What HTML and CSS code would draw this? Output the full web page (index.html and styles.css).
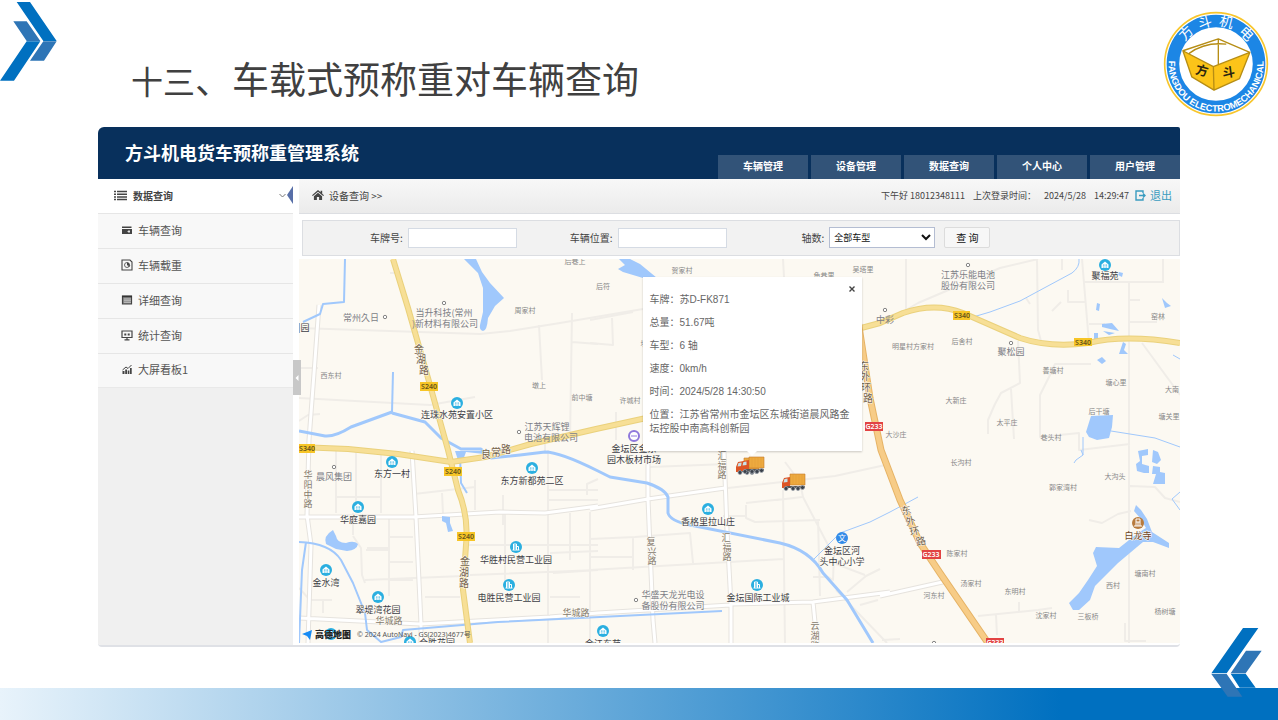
FILE: index.html
```html
<!DOCTYPE html>
<html lang="zh-CN">
<head>
<meta charset="utf-8">
<meta name="viewport" content="width=device-width, initial-scale=1">
<title>方斗机电货车预称重管理系统</title>
<link rel="stylesheet" href="styles.css">
</head>
<body>
<header class="slide-head">
  <svg class="chevron" viewBox="0 0 171 243" aria-hidden="true">
    <path fill="#0070c0" d="M50 6H90L170 123H130ZM80 124H121L42 242H0Z"/>
    <path fill="#2e75b6" d="M40 64H80L121 123H80ZM130 124H170L132 182H90Z"/>
  </svg>
  <h1 class="slide-title"><span class="slide-number">十三</span>、车载式预称重对车辆查询</h1>
  <svg class="logo" viewBox="40 32 318 320" role="img" aria-label="方斗机电">
    <defs><path id="arc" d="M57 176A143 143 0 1 0 341 176"/></defs>
    <circle cx="199" cy="192" r="155" fill="#fff" stroke="#f8c62c" stroke-width="5"/>
    <circle cx="199" cy="192" r="130" fill="#fff" stroke="#1c86e5" stroke-width="38"/>
    <g class="logo-name">
      <text transform="translate(199 192) rotate(-44)" y="-115">方</text>
      <text transform="translate(199 192) rotate(-15)" y="-115">斗</text>
      <text transform="translate(199 192) rotate(14)" y="-115">机</text>
      <text transform="translate(199 192) rotate(45)" y="-115">电</text>
    </g>
    <text class="logo-latin"><textPath href="#arc" startOffset="50%">FANGDOU ELECTROMECHANICAL</textPath></text>
    <path fill="#fff" d="M99 152L206 116L301 157L191 200Z"/>
    <path fill="#fcc419" d="M99 152L191 200L193 271L126 231ZM301 157L191 200L193 271L270 236Z"/>
    <path fill="none" stroke="#b68d14" stroke-width="4" stroke-linejoin="round" d="M99 152L206 116L301 157L191 200ZM99 152L126 231L193 271L270 236L301 157M191 200L193 271M206 116V193M118 160Q165 125 230 132"/>
    <text class="logo-brush" transform="translate(153 225) rotate(14)">方</text>
    <text class="logo-brush" transform="translate(239 231) rotate(-8)">斗</text>
  </svg>
</header>

<main class="app">
  <header class="app-head">
    <h2 class="app-title">方斗机电货车预称重管理系统</h2>
    <nav class="tabs">
      <a href="#vehicle">车辆管理</a><a href="#device">设备管理</a><a href="#data">数据查询</a><a href="#me">个人中心</a><a href="#user">用户管理</a>
    </nav>
  </header>
  <div class="app-body">
    <aside class="sidebar">
      <button class="side-head" type="button">
        <svg class="ic-list" viewBox="0 0 13 11" aria-hidden="true"><path stroke="#444" stroke-width="1.5" d="M0 1.5H2M3 1.5H13M0 4.2H2M3 4.2H13M0 6.9H2M3 6.9H13M0 9.6H2M3 9.6H13"/></svg>
        <span>数据查询</span>
        <svg class="ic-down" viewBox="0 0 7 5" aria-hidden="true"><path fill="none" stroke="#777" d="M.5 1L3.5 4L6.5 1"/></svg>
        <svg class="ic-tri" viewBox="0 0 6 18" aria-hidden="true"><path fill="#586fa8" d="M6 0V18L0 9Z"/></svg>
      </button>
      <ul class="side-list">
        <li><a href="#q1"><svg viewBox="0 0 12 12" aria-hidden="true"><path fill="#444" d="M1 2.5H10.500V4H1ZM1 5H11V10H1Z"/><path stroke="#fff" stroke-width=".8" d="M6.500 7.500H9M8 6V9"/></svg>车辆查询</a></li>
        <li><a href="#q2"><svg viewBox="0 0 12 12" aria-hidden="true"><path fill="none" stroke="#444" stroke-width="1.100" d="M1 1H9L11 3V11H1Z"/><circle cx="6" cy="6" r="2.500" fill="none" stroke="#444" stroke-width=".8"/><path fill="#444" d="M6 6V3.500A2.500 2.500 0 0 1 8.500 6ZM6 6L8 8L9.500 6.500Z"/></svg>车辆载重</a></li>
        <li><a href="#q3"><svg viewBox="0 0 12 12" aria-hidden="true"><path fill="#8b8b8b" stroke="#444" stroke-width="1.200" d="M1.500 2H10.500V10H1.500Z"/><path stroke="#333" stroke-width="1.500" d="M1 2.500H11"/><path stroke="#ddd" stroke-width=".6" d="M3 5H10M3 6.700H10M3 8.400H10"/></svg>详细查询</a></li>
        <li><a href="#q4"><svg viewBox="0 0 12 12" aria-hidden="true"><path fill="none" stroke="#444" stroke-width="1.200" d="M1 2H11V8.500H1ZM3.500 10.800H8.500M6 8.500V10.500"/><path fill="#444" d="M3.300 4.500H5.300V6.500H3.300ZM6.700 4.500H8.700V6.500H6.700Z"/></svg>统计查询</a></li>
        <li><a href="#q5"><svg viewBox="0 0 12 12" aria-hidden="true"><path fill="#444" d="M1.500 8H3.500V11H1.500ZM4.200 6.500H6V11H4.200ZM6.700 7.500H8.400V11H6.700ZM9 5H10.700V11H9Z"/><path fill="none" stroke="#444" d="M1.500 7L5 4L7 5.500L10.500 2"/></svg>大屏看板1</a></li>
      </ul>
    </aside>

    <section class="content">
      <button class="collapse" type="button" aria-label="收起菜单"><svg viewBox="0 0 8 10" aria-hidden="true"><path fill="#fff" d="M5.500 2V8L2.500 5Z"/></svg></button>
      <div class="crumbs">
        <svg class="ic-home" viewBox="0 0 12 10" aria-hidden="true"><path fill="#444" d="M6 0L0 5.300L.8 6.100L6 1.700L11.200 6.100L12 5.300L10.200 3.700V.7H8.600V2.300ZM6 2.700L1.900 6.200V10H4.900V7H7.100V10H10.100V6.200Z"/></svg>
        <span>设备查询 &gt;&gt;</span>
        <p class="login-info"><span>下午好 18012348111</span><span>上次登录时间：</span><span>2024/5/28</span><span>14:29:47</span></p>
        <a class="logout" href="#exit"><svg viewBox="0 0 11 11" aria-hidden="true"><path fill="none" stroke="#3a9cc0" stroke-width="1.400" d="M8 3V1H1V10H8V8M4 5.500H10M8 3.500L10 5.500L8 7.500"/></svg>退出</a>
      </div>
      <form class="filters" onsubmit="return false">
        <div class="field"><label for="plate">车牌号:</label><input id="plate" type="text"></div>
        <div class="field"><label for="place">车辆位置:</label><input id="place" type="text"></div>
        <div class="field last"><label for="axle">轴数:</label><select id="axle"><option>全部车型</option></select><button type="submit">查 询</button></div>
      </form>

      <div class="map">
        <svg class="map-canvas" viewBox="299 259 881 384" preserveAspectRatio="xMidYMid slice" role="img" aria-label="地图">
          <defs>
            <g id="home"><circle r="6" fill="#2bafe0"/><path fill="#fff" d="M-3.500 3V-.5L0-3.600L3.500-.5V3Z"/><path stroke="#2bafe0" stroke-width=".8" d="M-1.600-.6V.8M0-.6V.8M1.600-.6V.8M-1.600 1.500V2.600M0 1.500V2.600M1.600 1.500V2.600"/></g>
            <g id="tower"><circle r="6" fill="#2bafe0"/><path fill="none" stroke="#fff" d="M-2.500 3V-3H.5V3M.5-.5H2.500V3M-3.500 3H3.500M-1-2V2"/></g>
            <circle id="dot" r="1.700" fill="#fff" stroke="#777" stroke-width=".9"/>
            <g id="truck"><path fill="#edaa3f" stroke="#c47b2c" stroke-width=".6" d="M9 0H24V11H9Z"/><path stroke="#e09a38" stroke-width=".5" d="M12 0V11M15 0V11M18 0V11M21 0V11"/><path fill="#dd5424" d="M3 4L9 3V14H1V9Z"/><path fill="#c8e2e9" d="M3.500 5L6.500 4.500V8L2.500 8.500Z"/><path fill="#555" d="M5 12H24V14H5Z"/><g fill="#39404a" stroke="#9aa1a9" stroke-width=".8"><circle cx="5" cy="14.500" r="2"/><circle cx="12" cy="14.500" r="2"/><circle cx="17" cy="14.500" r="2"/><circle cx="21.500" cy="13.500" r="2"/></g></g>
          </defs>
          <rect class="land" x="0" y="0" width="2400" height="1400"/>

          <g class="lanes">
            <path d="M299 328L480 334L510 331L560 323L643 309M539 325L542 380M572 313L570 440M572 342L598 344M390 273H398M299 368H318M299 398L430 405L475 397M299 421L308 415L320 414"/>
            <path d="M590 320L633 312M612 318L613 345L590 343M783 259L784 277M616 412V440M545 444V452"/>
            <path d="M906 259V310L918 303L1000 268L1038 259M1037 259L1038 330L1041 341M1082 259L1089 343M1084 282H1164M1163 259V281M1062 259V270M1129 282V643M1130 300H1140M1128 322H1157M1089 324H1105M1068 290V302H1085M1061 302L1052 311M1026 298L1030 304M1142 343L1180 395M1018 341L1020 383L1001 393L995 404L988 420L988 434M1011 389L1014 439M1091 364H1055L1050 375L1040 395V437L1079 433V450L1130 444M1089 520L1102 523L1118 514L1131 511M1130 486L1155 487L1165 498L1180 502M978 616L1038 610L1052 608M996 615L997 635M1019 602V611M1125 623V641H1146M882 640L900 639"/>
            <path d="M336 451V513M356 451V513M381 451V513M336 497H380M353 513V535M367 548H389M389 518V596M366 550H388M389 562H413M389 580H413M389 537H413M310 600H332M323 600V613M299 588L310 600M353 536L361 548L362 575L365 583M365 580L463 576M425 597H460M414 494L475 487M442 493L443 513M475 480V510M503 495V525M548 450V643M549 490H598M549 500H598M587 495V484L598 479M505 513V590M468 545H598M470 575L598 570M550 553L598 551M550 597H580M590 512V643M570 513V560M553 573L598 570"/>
            <path d="M590 539L635 537M633 537V570M590 557H633M635 537L690 533L693 563M590 570L783 559M650 467L727 464M728 488L835 476L890 464M785 462L800 482L803 497L828 545L834 554L833 580L825 575M783 490L785 643M746 505V518L755 522L820 520M746 503L755 502L795 498M723 516H746M818 520L820 596M777 500L802 497M813 577H828M847 592L866 576L880 569M865 575L836 564M860 605L878 600M836 590L887 643"/>
          </g>
          <g class="roads-edge"><path d="M319 305L315 360L309 440L307 515L311 545L308 643M299 517L413 517L500 512L545 513L598 506M299 618L420 624L550 617L598 613L730 605M412 451L416 517L421 624V643M590 509L648 499L725 488M648 455V499L653 620L655 643M724 451L727 530L731 605V643M813 602L817 643M731 604L813 602L890 592M880 596L947 581"/></g>
          <g class="roads"><path d="M319 305L315 360L309 440L307 515L311 545L308 643M299 517L413 517L500 512L545 513L598 506M299 618L420 624L550 617L598 613L730 605M412 451L416 517L421 624V643M590 509L648 499L725 488M648 455V499L653 620L655 643M724 451L727 530L731 605V643M813 602L817 643M731 604L813 602L890 592M880 596L947 581"/></g>

          <g class="river">
            <path d="M345 259L344 302L323 304L320 314L303 322"/>
            <path d="M393 372L392 412"/>
            <path d="M392 412L351 427Q335 437 325 436L299 431M392 413L425 422L441 438L461 449L481 449L491 458L520 455L545 452Q560 452 598 471L610 477L647 483Q665 489 668 497V513Q670 521 690 525L780 543Q810 550 823 573L847 600L873 643" class="wide"/>
            <path d="M299 542Q330 543 341 560L353 583L365 613L367 630L381 642L401 637L403 630L498 622L722 611M460 455L461 483L467 493M299 643L302 570L306 542"/>
            <path class="thin" d="M813 560L840 533L870 522L890 512L918 497M1079 259Q1080 267 1072 273L1020 301L990 312L973 317M1111 431L1155 438L1180 447M1083 437V455M1173 355L1180 359M1081 450L1083 455L1076 460L1074 463M1180 510L1172 499L1180 492"/>
          </g>
          <g class="water">
            <path d="M464 259H476L482 272L490 283L504 298L495 306L488 318Q487 331 483 331Q479 330 480 325L483 312V288L478 273Z"/>
            <path d="M619 259H630L640 264L657 278H643L623 272L618 269L625 265Z"/>
            <path d="M333 530Q323 536 326 544L336 549L347 551Q357 550 358 544Q354 540 346 543Q337 543 336 536Z"/>
            <path d="M442 516L450 517V523L453 531L448 532L446 523L442 521Z"/>
            <path d="M455 451H480L488 449L484 454L466 452L462 463L458 460Z"/>
            <path d="M1091 416L1113 415L1112 427L1109 438L1097 440L1089 437L1086 432Z"/>
            <path d="M1138 451L1148 449V455L1142 456V464L1149 466V473H1144L1137 471L1136 464L1140 461Z"/>
            <path d="M1153 450L1158 452L1161 460L1157 464L1152 462ZM1153 466L1160 467V472L1165 473V484H1153L1156 474H1152Z"/>
            <path d="M1136 505L1141 510L1147 519L1152 532L1169 543V548L1153 542L1143 542L1137 547L1118 563L1095 586L1090 600L1079 610L1073 610L1069 603L1079 593L1088 580L1097 566L1093 553L1096 547L1119 548L1138 533L1146 528L1140 518L1134 511Z"/>
            <path d="M1097 303L1100 304L1099 311L1096 310ZM1119 272L1123 273L1122 277L1118 275ZM1162 298L1167 303L1171 306L1165 308ZM1102 324L1112 323L1119 331L1110 329L1102 327ZM1094 333H1098V339H1094ZM1103 331L1115 333L1109 335ZM1123 342L1126 344L1124 350L1128 354H1119ZM1097 360L1102 357L1106 361L1102 364Z"/>
          </g>

          <g class="trunk-edge"><path d="M299 447L348 449L398 454L451 462L485 457L531 444L596 429L660 415M850 331L880 323L903 313Q935 302 963 313L1020 338Q1050 348 1088 343Q1125 334 1180 343"/><path d="M393 259L408 308L430 385L448 450L458 490Q469 517 466 545L463 590L470 643"/></g>
          <g class="trunk"><path d="M299 447L348 449L398 454L451 462L485 457L531 444L596 429L660 415M850 331L880 323L903 313Q935 302 963 313L1020 338Q1050 348 1088 343Q1125 334 1180 343"/><path d="M393 259L408 308L430 385L448 450L458 490Q469 517 466 545L463 590L470 643"/></g>
          <path class="nation-edge" d="M858 320L870 398L881 450L900 500L920 543L940 573L988 643"/>
          <path class="nation" d="M858 320L870 398L881 450L900 500L920 543L940 573L988 643"/>

          <g class="shield-box"><path d="M420 382H438V391H420ZM299 444H315V453H299ZM444 467H462V476H444ZM457 532H475V541H457ZM953 311H970V320H953ZM1074 338H1092V346H1074Z"/><path class="red" d="M865 422H883V431H865ZM922 550H941V559H922ZM986 638H1004V647H986Z"/></g>
          <g class="shield"><text x="429" y="389">S240</text><text x="307" y="451">S340</text><text x="453" y="474">S240</text><text x="466" y="539">S240</text><text x="962" y="318">S340</text><text x="1083" y="345">S340</text><g class="inverse"><text x="874" y="429">G233</text><text x="931" y="557">G233</text><text x="995" y="645">G233</text></g></g>

          <g class="village">
            <text x="575" y="264">后巷上</text><text x="603" y="289">后符</text><text x="682" y="273">贺家村</text><text x="824" y="278">鱼巷里</text><text x="863" y="272">吴塔里</text>
            <text x="525" y="313">周家村</text><text x="331" y="378">西东村</text><text x="539" y="388">墩上</text><text x="582" y="400">前中塘</text><text x="630" y="403">许城村</text><text x="644" y="346">坟</text>
            <text x="913" y="349">明星村方家村</text><text x="962" y="344">后舍村</text><text x="1053" y="373">善塘村</text><text x="1116" y="385">塘心里</text><text x="1158" y="319">窑林</text><text x="1172" y="392">大南</text><text x="956" y="403">大新庄</text><text x="1007" y="425">太平庄</text><text x="1099" y="414">后干塘</text><text x="1169" y="419">塘关里</text><text x="896" y="437">大沙庄</text><text x="1051" y="440">巷头村</text>
            <text x="961" y="465">长沟村</text><text x="1115" y="479">大沟头</text><text x="1063" y="490">郭家湾村</text><text x="957" y="556">陈家村</text><text x="971" y="586">汤家村</text><text x="934" y="598">河东村</text><text x="1015" y="594">东明村</text><text x="1046" y="618">沈家村</text><text x="1088" y="619">三板桥</text><text x="1113" y="588">西村</text><text x="1145" y="576">塘南村</text><text x="1165" y="614">杨树塘</text>
          </g>
          <g class="place">
            <text x="361" y="321">常州久日</text><use href="#dot" x="385" y="317"/>
            <use href="#dot" x="444" y="303"/><text x="444" y="316">当升科技(常州</text><text x="445" y="327">)新材料有限公司</text>
            <use href="#dot" x="519" y="432"/><text x="547" y="430">江苏天辉锂</text><text x="551" y="441">电池有限公司</text>
            <use href="#dot" x="968" y="265"/><text x="968" y="278">江苏乐能电池</text><text x="968" y="289">股份有限公司</text>
            <use href="#dot" x="885" y="310"/><text x="885" y="323">中彩</text>
            <use href="#dot" x="1011" y="343"/><text x="1011" y="355">聚松园</text>
            <use href="#dot" x="334" y="467"/><text x="334" y="480">晨风集团</text>
            <use href="#dot" x="636" y="600"/><text x="673" y="598">华盛天龙光电设</text><text x="673" y="609">备股份有限公司</text>
            <use href="#dot" x="934" y="643"/>
          </g>
          <g class="street">
            <text x="419 421 424" y="353 363 374">金湖路</text>
            <text x="465 464 464" y="565 576 587">金湖路</text>
            <text x="486 496 506" y="458 456 453">良常路</text>
            <text x="864 865 866 868" y="370 380 391 402">东外环路</text>
            <text transform="rotate(-12 907 514)" x="907 909 911 915" y="514 525 536 547">东外环路</text>
            <g class="small-street"><text x="308 308 308 308" y="478 488 498 507">华阳中路</text><text x="651 652 652" y="545 555 564">复兴路</text><text x="722 722 722" y="459 469 478">汇福路</text><text x="726 727 727" y="541 551 560">汇福路</text><text x="815 815 815" y="629 639 649">云湖路</text><text x="389" y="624">华城路</text><text x="576" y="616">华城路</text></g>
          </g>
          <g class="poi">
            <use href="#home" x="457" y="403"/><text x="457" y="418">连珠水苑安置小区</text>
            <use href="#home" x="392" y="462"/><text x="392" y="477">东方一村</text>
            <use href="#home" x="532" y="468"/><text x="532" y="484">东方新都苑二区</text>
            <use href="#home" x="358" y="507"/><text x="358" y="523">华庭嘉园</text>
            <use href="#home" x="326" y="570"/><text x="326" y="586">金水湾</text>
            <use href="#home" x="378" y="597"/><text x="378" y="613">翠堤湾花园</text>
            <use href="#tower" x="516" y="547"/><text x="516" y="563">华胜村民营工业园</text>
            <use href="#tower" x="509" y="585"/><text x="509" y="601">电胜民营工业园</text>
            <use href="#home" x="410" y="642"/><text x="437" y="646">合胜花园</text>
            <use href="#home" x="331" y="634"/>
            <use href="#home" x="603" y="631"/><text x="603" y="647">金江东苑</text>
            <use href="#home" x="708" y="509"/><text x="708" y="525">香格里拉山庄</text>
            <use href="#tower" x="757" y="585"/><text x="758" y="601">金坛国际工业城</text>
            <circle cx="842" cy="538" r="6" fill="#338be8"/><text class="glyph" x="842" y="541">文</text><text x="842" y="554">金坛区河</text><text x="842" y="565">头中心小学</text>
            <use href="#home" x="1105" y="265"/><text x="1105" y="279">聚福苑</text>
            <circle cx="634" cy="436" r="5" fill="#fff" stroke="#8f78dc" stroke-width="2"/><path stroke="#8f78dc" d="M631 436H637"/><text x="634" y="452">金坛区金东</text><text x="634" y="463">园木板材市场</text>
            <circle cx="1138" cy="523" r="6" fill="#b87b3d"/><path fill="none" stroke="#fff" d="M1136 526V519H1140V526M1134 526H1142M1136 522H1140M1138 522V526"/><text class="temple" x="1138" y="539">白龙寺</text>
            <text class="edge" x="298" y="331">|园</text>
          </g>
          <use href="#truck" x="735" y="458"/><use href="#truck" x="740" y="457"/><use href="#truck" x="781" y="474"/>
          <path fill="#168bf4" d="M302 634L312 630L310 640L307 636Z"/>
          <text class="brand" x="315" y="638">高德地图</text>
          <text class="copyright" x="357" y="637">© 2024 AutoNavi - GS(2023)4677号</text>
        </svg>
        <article class="popup">
          <button type="button" aria-label="关闭"><svg viewBox="0 0 6 6" aria-hidden="true"><path stroke="#444" stroke-width="1.400" d="M.5 .5L5.500 5.500M5.500 .5L.5 5.500"/></svg></button>
          <p>车牌：苏D-FK871</p><p>总量：51.67吨</p><p>车型：6 轴</p><p>速度：0km/h</p><p>时间：2024/5/28 14:30:50</p><p>位置：江苏省常州市金坛区东城街道晨风路金坛控股中南高科创新园</p>
        </article>
      </div>
    </section>
  </div>
</main>

<footer class="slide-foot">
  <svg viewBox="95 55 151 207" aria-hidden="true"><path fill="#0070c0" d="M190 55H236L141 191H95ZM153 192H198L228 234H180Z"/><path fill="#2e75b6" d="M95 193H141L188 261H144ZM199 123H246L198 191H153Z"/></svg>
</footer>
</body>
</html>
```
FILE: styles.css
```css
* { box-sizing: border-box; }
body {
  margin: 0;
  min-height: 100vh;
  display: flex;
  flex-direction: column;
  background: #fff;
  color: #444;
  font-family: "Liberation Sans", "Noto Sans CJK SC", sans-serif;
  font-size: 10px;
}
h1, h2, p, ul { margin: 0; padding: 0; }
ul { list-style: none; }
a { color: inherit; text-decoration: none; }
button, input, select { font: inherit; color: inherit; }
svg { display: block; }

.slide-head { display: flex; align-items: flex-start; min-height: 127px; padding-right: 9px; }
.chevron { width: 57px; height: 81px; }
.slide-title {
  flex: 1;
  padding: 51px 0 0 74px;
  color: #404040;
  font: 400 37px/54px "Noto Sans CJK SC", sans-serif;
}
.slide-number { font-size: 32px; }
.logo { width: 106px; height: 106px; margin-top: 11px; }
.logo-name { fill: #fff; font: 400 42px "Noto Sans CJK SC", sans-serif; text-anchor: middle; }
.logo-latin { fill: #fff; font: 700 28px "Liberation Sans", sans-serif; text-anchor: middle; }
.logo-brush { fill: #2b2410; font: 700 38px "Noto Sans CJK SC", sans-serif; text-anchor: middle; }

.app {
  margin: 0 98px;
  border-radius: 6px 2px 4px 4px;
  overflow: hidden;
  flex: 1;
  display: flex;
  flex-direction: column;
  border-bottom: 2px solid #dfe1e6;
}
.app-head { display: flex; justify-content: space-between; min-height: 52px; background: #08305c; color: #fff; }
.app-title { padding-left: 27px; font: 700 18px/50px "Noto Sans CJK SC", sans-serif; }
.tabs { display: flex; gap: 3px; align-self: flex-end; }
.tabs a { width: 90px; padding-bottom: 2px; background: #325378; text-align: center; font: 700 10px/22px "Noto Sans CJK SC", sans-serif; }
.app-body { display: flex; flex: 1; }

.sidebar { flex: 0 0 195px; background: #f0f0f0; }
.side-head {
  display: flex;
  align-items: center;
  width: 100%;
  height: 34px;
  padding: 0 0 2px 16px;
  border: 0;
  background: #fff;
  font: 700 10px "Noto Sans CJK SC", sans-serif;
}
.ic-list { width: 13px; height: 11px; margin-right: 6px; }
.ic-down { width: 7px; height: 5px; margin: 0 1px 0 auto; }
.ic-tri { width: 6px; height: 18px; }
.side-list a {
  display: flex;
  align-items: center;
  gap: 5px;
  height: 35px;
  padding: 0 0 3px 23px;
  border-top: 1px solid #e6e6e6;
  background: #f8f8f8;
  color: #555;
  font: 11px "Noto Sans CJK SC", sans-serif;
}
.side-list li:last-child a { height: 34px; }
.side-list li:last-child { border-bottom: 1px solid #e9e9e9; }
.side-list svg { width: 12px; height: 12px; }

.content { position: relative; flex: 1; min-width: 0; padding-left: 6px; display: flex; flex-direction: column; }
.collapse {
  position: absolute;
  z-index: 1;
  left: 0;
  top: 181px;
  width: 8px;
  height: 35px;
  padding: 0;
  border: 0;
  background: #c8c8c8;
}
.crumbs {
  display: flex;
  align-items: center;
  min-height: 35px;
  padding: 0 8px 2px 13px;
  border-bottom: 1px solid #dcdee2;
  background: linear-gradient(#f8f8f8, #ebebeb);
  font-family: "Noto Sans CJK SC", sans-serif;
}
.ic-home { width: 12px; height: 10px; margin-right: 5px; }
.login-info { display: flex; gap: 8px; margin-left: auto; font-size: 9px; }
.logout { display: flex; align-items: center; gap: 4px; margin-left: 6px; color: #3a9cc0; font-size: 11px; }
.logout svg { width: 11px; height: 11px; }

.filters {
  display: flex;
  align-items: center;
  gap: 53px;
  min-height: 36px;
  margin: 6px 0 3px 3px;
  padding: 0 0 1px 67px;
  border: 1px solid #dcdee2;
  background: #f2f2f2;
  font-family: "Noto Sans CJK SC", sans-serif;
}
.field { display: flex; align-items: center; gap: 5px; white-space: nowrap; }
.field.last { margin-left: 22px; }
.field input { width: 109px; height: 20px; border: 1px solid #d5dbe4; background: #fff; }
.field select { width: 106px; height: 21px; padding: 0; border: 1px solid #b4bdd2; background: #fff; color: #111; font-size: 9px; }
.field button { width: 46px; height: 21px; margin-left: 4px; padding: 0; border: 1px solid #dcdcdc; border-radius: 2px; background: #f7f7f7; color: #111; }

.map { position: relative; flex: 1; min-height: 384px; margin-bottom: 2px; overflow: hidden; background: #fcf9f2; }
.map-canvas { position: absolute; width: 100%; height: 100%; font-family: "Noto Sans CJK SC", sans-serif; text-anchor: middle; }
.land { fill: #fcf9f2; }
.lanes, .roads, .roads-edge, .river, .trunk, .trunk-edge, .nation, .nation-edge { fill: none; stroke-linejoin: round; }
.lanes { stroke: #f0ede8; stroke-width: 2; }
.roads-edge { stroke: #e6e3de; stroke-width: 5; }
.roads { stroke: #fff; stroke-width: 3; }
.river { stroke: #a0c8fc; stroke-width: 2; }
.river .wide { stroke-width: 3; }
.river .thin { stroke-width: 1; }
.water { fill: #a0c8fc; }
.trunk-edge { stroke: #ead17c; stroke-width: 6; }
.trunk { stroke: #f7df96; stroke-width: 4; }
.nation-edge { stroke: #e6b365; stroke-width: 7; }
.nation { stroke: #f7cc87; stroke-width: 5; }
.shield-box { fill: #f7c526; }
.shield-box .red { fill: #e24343; }
.shield { fill: #66541c; font: 600 7px "Noto Sans", sans-serif; }
.shield .inverse { fill: #fff; }
.village { fill: #888; font-size: 7px; }
.place { fill: #7c7e86; font-size: 9px; }
.street { fill: #75634c; font-size: 10px; stroke: #fcf9f2; stroke-width: 1; paint-order: stroke; }
.small-street { font-size: 9px; fill: #85796d; }
.poi { fill: #3c3e46; font-size: 9px; }
.poi text { stroke: #fcf9f2; stroke-width: 1; paint-order: stroke; }
.poi .glyph { fill: #fff; stroke: none; font-size: 8px; }
.poi .temple { fill: #6e4526; }
.poi .edge { text-anchor: start; }
.brand { fill: #222; font-size: 9px; font-weight: 900; text-anchor: start; }
.copyright { fill: #555; font: 7px "Noto Sans", "Noto Sans CJK SC", sans-serif; text-anchor: start; }

.popup {
  position: absolute;
  left: calc(50% - 97px);
  top: 18px;
  width: 219px;
  min-height: 174px;
  padding: 16px 10px 9px 7px;
  background: #fff;
  box-shadow: 0 1px 2px #0003;
  color: #666;
  line-height: 14px;
}
.popup::after {
  content: "";
  position: absolute;
  left: 50%;
  top: 100%;
  margin-left: -5px;
  border: 5px solid transparent;
  border-top-color: #fff;
  border-bottom: 0;
}
.popup p + p { margin-top: 9px; }
.popup button { position: absolute; right: 7px; top: 9px; padding: 0; border: 0; background: none; }
.popup button svg { width: 6px; height: 6px; }

.slide-foot {
  position: relative;
  height: 32px;
  margin-top: 41px;
  background: linear-gradient(90deg, #e8f3fb 0%, #0070c0 83%);
}
.slide-foot svg { position: absolute; right: 16px; bottom: 23px; width: 51px; height: 69px; }
```
